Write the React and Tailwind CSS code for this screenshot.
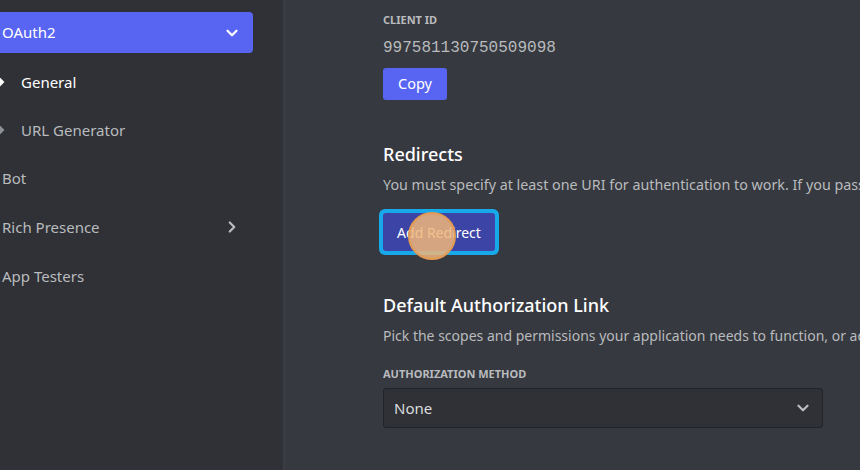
import { FiChevronDown, FiChevronRight } from "react-icons/fi";

const font = { fontFamily: '"Noto Sans", "Open Sans", sans-serif' };

const Bullet = ({ active }) => (
  <span
    className={`absolute left-[-4px] top-1/2 h-[7px] w-[7px] -translate-y-1/2 rotate-45 ${
      active ? "bg-white" : "bg-[#8e9297]"
    }`}
  />
);

const Sidebar = () => (
  <aside className="flex w-[283px] shrink-0 flex-col bg-[#2f3136] pt-3 pr-[30px]">
    <div className="flex h-[41px] items-center justify-between rounded-r-[4px] bg-[#5865f2] pl-[2px] pr-[12px] text-white">
      <span className="text-[15px]">OAuth2</span>
      <FiChevronDown size={18} strokeWidth={3} />
    </div>
    <div className="relative mt-[8px] flex h-[42px] items-center pl-[21px] text-[15px] text-white">
      <Bullet active />
      General
    </div>
    <div className="relative mt-[6px] flex h-[42px] items-center pl-[21px] text-[15px] text-[#b9bbbe]">
      <Bullet />
      URL Generator
    </div>
    <div className="mt-[6px] flex h-[42px] items-center pl-[2px] text-[15px] text-[#b9bbbe]">
      Bot
    </div>
    <div className="mt-[7px] flex h-[42px] items-center justify-between pl-[2px] pr-[12px] text-[15px] text-[#b9bbbe]">
      <span>Rich Presence</span>
      <FiChevronRight size={18} strokeWidth={3} />
    </div>
    <div className="mt-[7px] flex h-[42px] items-center pl-[2px] text-[15px] text-[#b9bbbe]">
      App Testers
    </div>
  </aside>
);

export default function App() {
  return (
    <div className="flex h-[470px] w-[860px] overflow-hidden bg-[#36393f]" style={font}>
      <Sidebar />
      <div className="w-[2px] shrink-0 bg-[#3a3d44]" />
      <main className="flex-1 overflow-hidden pl-[98px] pt-[12px]">
        <div className="flex gap-[396px]">
          <div className="flex shrink-0 flex-col">
            <span className="text-[11px] font-bold uppercase leading-[16px] text-[#b9bbbe]">
              Client ID
            </span>
            <span
              className="mt-[8px] text-[16px] leading-[24px] text-[#b9bbbe]"
              style={{ fontFamily: '"Liberation Mono", monospace' }}
            >
              997581130750509098
            </span>
            <button
              type="button"
              className="mt-[8px] h-[32px] w-[64px] rounded-[3px] bg-[#5865f2] text-[14.5px] text-white"
            >
              Copy
            </button>
          </div>
          <div className="flex shrink-0 flex-col">
            <span className="text-[11px] font-bold uppercase leading-[16px] text-[#b9bbbe]">
              Client Secret
            </span>
            <div className="mt-[8px] h-[32px] w-[80px] rounded-[3px] bg-[#5865f2]" />
          </div>
        </div>

        <h2 className="mt-[41px] text-[18px] font-medium leading-[26px] text-white">
          Redirects
        </h2>
        <p className="mt-[8px] whitespace-nowrap text-[14.3px] leading-[20px] text-[#b9bbbe]">
          You must specify at least one URI for authentication to work. If you pass a URI in an OAuth request, it must exactly match one of the URIs you enter here.
        </p>
        <div className="relative mt-[14px] ml-[-4px] inline-flex rounded-[6px] bg-[#18a9ea] p-[4px]">
          <button
            type="button"
            className="h-[38px] w-[112px] rounded-[3px] bg-[#3c45a5] text-[14px] text-white"
          >
            Add Redirect
          </button>
          <span className="absolute left-[29px] top-[3px] h-[48px] w-[48px] rounded-full border-2 border-[#e39a52] bg-[#f0b57a]/85" />
        </div>

        <h2 className="mt-[37px] text-[18px] font-medium leading-[26px] text-white">
          Default Authorization Link
        </h2>
        <p className="mt-[8px] whitespace-nowrap text-[14px] leading-[20px] text-[#b9bbbe]">
          Pick the scopes and permissions your application needs to function, or add a custom URL.
        </p>
        <div className="mt-[20px] text-[11px] font-bold uppercase leading-[16px] text-[#b9bbbe]">
          Authorization Method
        </div>
        <div className="mt-[6px] flex h-[40px] w-[440px] items-center justify-between rounded-[3px] border border-[#232428] bg-[#2f3136] pl-[10px] pr-[10px] text-[15px] text-[#dcddde]">
          <span>None</span>
          <FiChevronDown size={18} strokeWidth={3} className="text-[#b9bbbe]" />
        </div>
      </main>
    </div>
  );
}
